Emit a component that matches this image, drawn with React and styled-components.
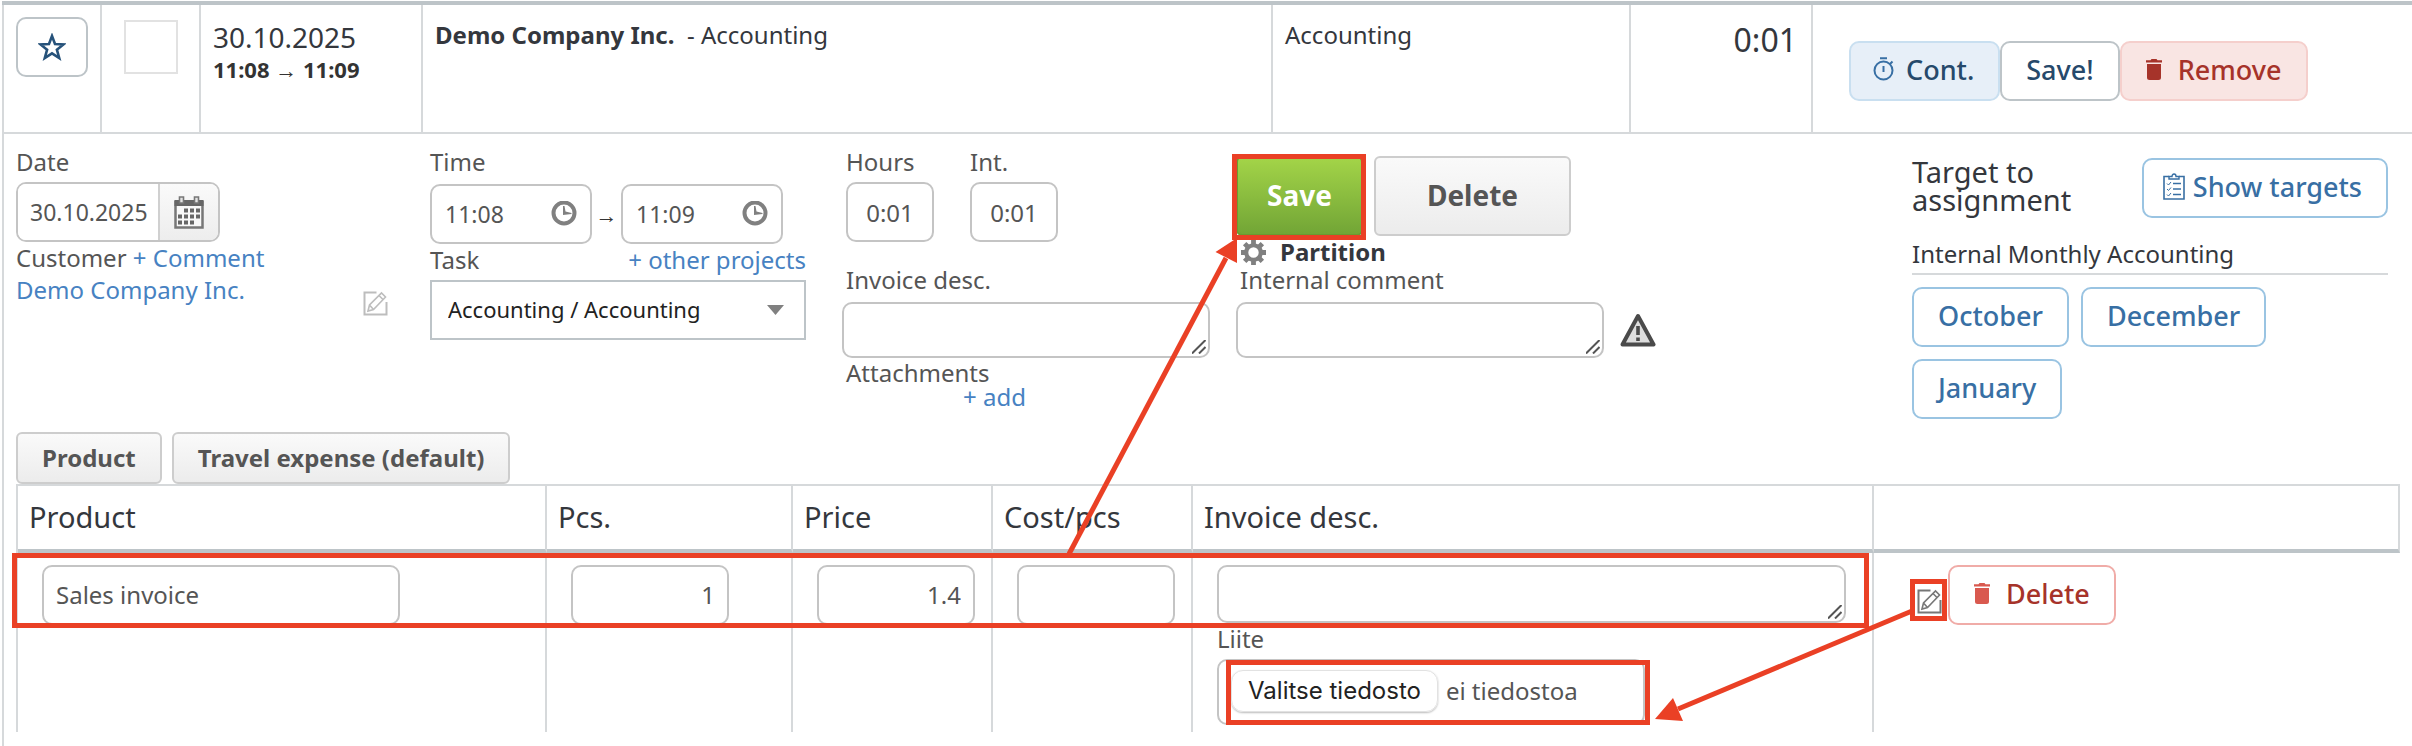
import React from "react";
import styled, { createGlobalStyle, css } from "styled-components";

const Global = createGlobalStyle`
  *, *::before, *::after { box-sizing: border-box; }
  body { margin: 0; background: #fff; }
  body, button, input, select, textarea { font-family: "Noto Sans", "Open Sans", sans-serif; }
`;

const red = "#ea4025";
const line = "#d6d9db";
const bar = "#bdc4c8";

const Page = styled.main`
  min-width: 2300px;
  padding: 1px 0 0 2px;
  color: #34373d;
  font-size: 24px;
  line-height: 32px;
`;

/* Summary row */
const SummaryTable = styled.table`
  width: 100%;
  table-layout: fixed;
  border-collapse: separate;
  border-spacing: 0;
  border-top: 4px solid ${bar};
`;
const SummaryCell = styled.td`
  width: ${(p) => (p.$w ? `${p.$w}px` : "auto")};
  height: 129px;
  padding: ${(p) => p.$pad || "12px"};
  vertical-align: top;
  text-align: ${(p) => p.$align || "left"};
  border-left: 2px solid ${line};
  border-bottom: 2px solid ${line};
`;
const StarButton = styled.button`
  display: flex;
  align-items: center;
  justify-content: center;
  width: 72px;
  height: 60px;
  padding: 0;
  background: #fff;
  border: 2px solid ${bar};
  border-radius: 10px;
`;
const Tick = styled.input`
  appearance: none;
  display: block;
  width: 54px;
  height: 54px;
  margin: 0;
  border: 2px solid #e2e2e2;
`;
const BigText = styled.div`
  font-size: ${(p) => p.$size || 28}px;
  line-height: 40px;
`;
const TimeSpan = styled.div`
  font-size: 22px;
  font-weight: 700;
  line-height: 24px;
  color: #333;
`;
const Actions = styled.div`
  display: flex;
`;
const tones = {
  blue: css`color: #26496b; background: #e7eff8; border-color: #c9dff0;`,
  plain: css`color: #26496b; background: #fff; border-color: ${bar};`,
  red: css`color: #a6332a; background: #f9e5e3; border-color: #f5cfcc;`,
  outline: css`color: #386fa4; background: #fff; border-color: #9ac4e2;`,
  danger: css`color: #a6332a; background: #fff; border-color: #f0aca8;`,
};
const Button = styled.button`
  display: flex;
  align-items: center;
  gap: ${(p) => p.$gap || 12}px;
  height: 60px;
  padding: 0 24px 4px ${(p) => p.$left || 24}px;
  font-size: 27px;
  font-weight: 500;
  white-space: nowrap;
  border: 2px solid;
  border-radius: 10px;
  ${(p) => tones[p.$tone]}
`;

/* Edit form */
const Panel = styled.section`
  border-left: 2px solid ${line};
  padding: 12px 12px 14px;
`;
const Form = styled.form`
  display: flex;
  padding-right: 12px;
  color: #555;
`;
const Column = styled.div`
  width: ${(p) => p.$w}px;
  margin-right: ${(p) => p.$gap || 0}px;
`;
const Label = styled.label`
  display: block;
  padding-left: ${(p) => p.$inset || 0}px;
  margin-bottom: ${(p) => p.$below || 0}px;
`;
const Row = styled.div`
  display: flex;
  align-items: ${(p) => p.$align || "center"};
  justify-content: ${(p) => p.$justify || "flex-start"};
  gap: ${(p) => p.$gap || 0}px;
  margin-bottom: ${(p) => p.$below || 0}px;
`;
const Link = styled.a`
  color: #4782c2;
  text-decoration: none;
`;
const box = css`
  border: 2px solid #c4c4c4;
  border-radius: 10px;
  background: #fff;
  color: #555;
`;
const Input = styled.input`
  ${box}
  display: block;
  width: ${(p) => p.$w}px;
  height: 60px;
  padding: ${(p) => p.$pad || "0 12px 2px"};
  font-size: 24px;
  text-align: ${(p) => p.$align || "left"};
`;
const DateGroup = styled.div`
  ${box}
  display: flex;
  width: 204px;
  height: 60px;
  overflow: hidden;
`;
const DateInput = styled.input`
  width: 140px;
  border: 0;
  padding: 0 0 0 12px;
  font-size: 23px;
  color: #555;
`;
const DateButton = styled.button`
  display: flex;
  align-items: center;
  justify-content: center;
  flex: 1;
  padding: 0;
  border: 0;
  border-left: 2px solid #d0d0d0;
  background: linear-gradient(#fafafa, #ededed);
`;
const TimeField = styled.div`
  ${box}
  display: flex;
  align-items: center;
  width: 162px;
  height: 60px;
  padding: 0 13px;
`;
const TimeInput = styled.input`
  flex: 1;
  min-width: 0;
  height: 40px;
  border: 0;
  padding: 0;
  background: none;
  font-size: 23px;
  color: #555;
`;
const Arrow = styled.span`
  width: 29px;
  text-align: center;
  font-size: 22px;
  color: #333;
`;
const SelectBox = styled.div`
  display: grid;
  align-items: center;
  height: 60px;
  border: 2px solid ${bar};
  > * { grid-area: 1 / 1; }
  > svg { justify-self: end; margin-right: 20px; pointer-events: none; }
`;
const Select = styled.select`
  appearance: none;
  height: 100%;
  padding: 0 16px 2px;
  border: 0;
  background: none;
  font-size: 22px;
  color: #222;
`;
const AreaBox = styled.div`
  display: grid;
  width: ${(p) => (p.$w ? `${p.$w}px` : "100%")};
  height: ${(p) => p.$h || 56}px;
  > * { grid-area: 1 / 1; }
  > svg { place-self: end; margin: 0 4px 4px 0; pointer-events: none; }
`;
const Area = styled.textarea`
  ${box}
  display: block;
  width: 100%;
  height: 100%;
  resize: none;
`;
const Attachments = styled.div`
  margin-top: 3px;
`;
const CompactLine = styled.div`
  line-height: 24px;
  padding-left: ${(p) => p.$inset}px;
`;
const HoursRow = styled.div`
  display: flex;
  gap: 36px;
  padding-left: 4px;
  margin-bottom: 22px;
`;
const CommentColumn = styled.div`
  padding-top: 10px;
`;
const GreyButton = styled.button`
  height: ${(p) => p.$h || 52}px;
  padding: 0 ${(p) => p.$x || 24}px 2px;
  font-size: ${(p) => p.$size || 24}px;
  font-weight: 700;
  color: #555;
  background: linear-gradient(#fafafa, #ececec);
  border: 2px solid #cdcdcd;
  border-radius: 6px;
`;
const GreenButton = styled(GreyButton)`
  color: #fff;
  background: linear-gradient(#a3d448, #72a536);
  border-color: #6a9a30;
`;
const Marked = styled.div`
  position: relative;
  display: flex;
`;
const EditMarked = styled(Marked)`
  margin-top: 12px;
`;
const Mark = styled.span`
  position: absolute;
  z-index: 1;
  inset: ${(p) => p.$inset};
  height: ${(p) => (p.$h ? `${p.$h}px` : "auto")};
  border: 5px solid ${red};
  pointer-events: none;
`;
const MarkArrow = styled.svg`
  position: absolute;
  left: ${(p) => p.$x}px;
  top: ${(p) => p.$y}px;
  z-index: 2;
  fill: ${red};
  stroke: ${red};
  pointer-events: none;
`;
const PartitionLine = styled.div`
  display: flex;
  align-items: center;
  gap: 14px;
  height: 28px;
  padding: 4px 0 0 5px;
  font-weight: 700;
  color: #34373d;
`;
const Targets = styled.aside`
  width: 476px;
  margin-left: auto;
  padding-top: 12px;
  color: #34373d;
`;
const TargetTitle = styled.h2`
  width: 200px;
  margin: 0;
  font-size: 29px;
  font-weight: 400;
  line-height: 28px;
`;
const TargetGroup = styled.h3`
  margin: 20px 0 12px;
  padding-bottom: 3px;
  font-size: 24px;
  font-weight: 400;
  border-bottom: 2px solid ${line};
`;
const Months = styled.div`
  display: flex;
  flex-wrap: wrap;
  gap: 12px;
  padding-right: 100px;
`;
const Tabs = styled.div`
  display: flex;
  gap: 10px;
  margin-top: 13px;
`;

/* Product lines */
const ProductTable = styled.table`
  width: 100%;
  table-layout: fixed;
  border-collapse: separate;
  border-spacing: 0;
  border-left: 2px solid ${line};
`;
const Head = styled.th`
  width: ${(p) => (p.$w ? `${p.$w}px` : "auto")};
  height: 69px;
  padding: 0 0 2px 11px;
  font-size: 29px;
  font-weight: 400;
  text-align: left;
  border-top: 2px solid ${line};
  border-bottom: 4px solid ${bar};
  border-right: 2px solid ${line};
`;
const LineRow = styled.tr`
  position: relative;
`;
const Cell = styled.td`
  height: 179px;
  padding: 12px 26px 0 24px;
  vertical-align: top;
  color: #555;
  border-right: 2px solid ${line};
  &:last-child { border-right: 0; padding-left: 43px; }
`;
const FileField = styled.label`
  ${box}
  position: relative;
  display: flex;
  align-items: center;
  width: 428px;
  height: 66px;
  margin-top: 4px;
  padding: 0 0 2px 12px;
`;
const HiddenFile = styled.input`
  position: absolute;
  width: 1px;
  height: 1px;
  opacity: 0;
`;
const FileButton = styled.span`
  height: 42px;
  margin-right: 8px;
  padding: 0 16px;
  font-family: Inter, sans-serif;
  line-height: 40px;
  font-size: 24px;
  color: #222;
  border: 1px solid #e2e2e2;
  border-radius: 12px;
  box-shadow: 0 1px 2px #0004;
`;
const IconButton = styled.button`
  display: block;
  padding: 0;
  border: 0;
  background: none;
  line-height: 0;
`;
const EditCustomer = styled(IconButton)`
  margin-top: 17px;
`;

const Star = () => (
  <svg width="28" height="28" viewBox="0 0 28 28" fill="none" stroke="#26527a" strokeWidth="2.6">
    <path d="M14 3l3 8 8.500.4-6.600 5.300 2.300 8.300-7.200-4.700-7.200 4.700 2.300-8.300L2.500 11.400 11 11z" />
  </svg>
);
const Calendar = () => (
  <svg width="30" height="33" viewBox="0 0 30 33">
    <path d="M1.500 6h27v25.500h-27z" fill="#f8f8f8" stroke="#777" strokeWidth="2.500" />
    <path d="M.5 4h29v6H.5z" fill="#666" />
    <path d="M5.500 1h4v6h-4zM20.500 1h4v6h-4z" fill="#e4e4e4" stroke="#777" strokeWidth="1.600" />
    <path d="M10 12.500h4v4h-4zM16 12.500h4v4h-4zM22 12.500h4v4h-4zM4 18.500h4v4H4zM10 18.500h4v4h-4zM16 18.500h4v4h-4zM22 18.500h4v4h-4zM4 24.500h4v4H4zM10 24.500h4v4h-4zM16 24.500h4v4h-4z" fill="#666" />
  </svg>
);
const Clock = () => (
  <svg width="26" height="26" viewBox="0 0 26 26">
    <circle cx="13" cy="12" r="10.500" fill="none" stroke="#808080" strokeWidth="4" />
    <path d="M12 5h1.500l1 5.500 6 1.500v1l-8.500 1z" fill="#808080" />
  </svg>
);
const Pencil = ({ color }) => (
  <svg width="25" height="25" viewBox="0 0 25 25" fill="none" stroke={color} strokeWidth="2">
    <path d="M13.500 1.500H1.500v22h22V11" />
    <path d="M5 20l1.500-6L18.500 2l4 4-12 12.500zM16 4.500l4 4M6.500 14l4 4.500" strokeWidth="1.600" />
  </svg>
);
const Gear = () => (
  <svg width="25" height="25" viewBox="0 0 24 24">
    <g fill="none" stroke="#808080">
      <circle cx="12" cy="12" r="7" strokeWidth="4" />
      <path d="M12 0v4M12 20v4M0 12h4M20 12h4M3.500 3.500l3 3M17.500 17.500l3 3M3.500 20.500l3-3M17.500 6.500l3-3" strokeWidth="4.600" />
    </g>
  </svg>
);
const Warning = () => (
  <svg width="36" height="34" viewBox="0 0 36 34">
    <path d="M18 3L33.500 31.500h-31z" fill="#ddd" stroke="#4a4a4a" strokeWidth="4" strokeLinejoin="round" />
    <path d="M18 13v9M18 24.500v3.500" stroke="#4a4a4a" strokeWidth="3.600" />
  </svg>
);
const Stopwatch = () => (
  <svg width="21" height="24" viewBox="0 0 21 24" fill="none" stroke="#386fa4" strokeWidth="2">
    <circle cx="10.500" cy="13.500" r="9" />
    <path d="M7 1.200h7M10.500 9v6M17 7l2.500-2.500" />
  </svg>
);
const Trash = ({ color }) => (
  <svg width="16" height="21" viewBox="0 0 16 21" fill={color}>
    <path d="M0 1.200h4.500L5.500 0h5l1 1.200H16V3.500H0zM1 5h14v13.500a2.500 2.500 0 0 1-2.500 2.500h-9A2.500 2.500 0 0 1 1 18.500z" />
  </svg>
);
const Clipboard = () => (
  <svg width="22" height="27" viewBox="0 0 22 27" fill="none" stroke="#386fa4">
    <path d="M6 3.500H1V26h20V3.500h-5" strokeWidth="1.600" />
    <path d="M6 6V3.500h3a2 2.500 0 0 1 4 0h3V6z" strokeWidth="1.400" />
    <path d="M10 10.500h8M10 16h8M10 21.500h8" strokeWidth="1.600" />
    <path d="M4 10.500l1.500 1.500L8 9M4 16l1.500 1.500L8 14.500M4 21.500L5.500 23 8 20" strokeWidth="1" />
  </svg>
);
const Triangle = () => (
  <svg width="17" height="10" viewBox="0 0 17 10" fill="#808080"><path d="M0 0h17L8.500 10z" /></svg>
);
const Grip = () => (
  <svg width="14" height="14" viewBox="0 0 14 14" stroke="#555" strokeWidth="2"><path d="M0 13.500L13.500 0M7 13.500L13.500 7" /></svg>
);

const TextArea = ({ id, w, h, label }) => (
  <AreaBox $w={w} $h={h}>
    <Area id={id} aria-label={label} />
    <Grip />
  </AreaBox>
);

const heads = [["Product", 529], ["Pcs.", 246], ["Price", 200], ["Cost/pcs", 200], ["Invoice desc.", 0], ["", 526]];

export default function App() {
  return (
    <>
      <Global />
      <Page>
        <SummaryTable>
          <tbody>
            <tr>
              <SummaryCell $w={98}><StarButton aria-label="Favourite"><Star /></StarButton></SummaryCell>
              <SummaryCell $w={99} $pad="15px 22px"><Tick type="checkbox" aria-label="Select entry" /></SummaryCell>
              <SummaryCell $w={222}>
                <BigText>30.10.2025</BigText>
                <TimeSpan>11:08 → 11:09</TimeSpan>
              </SummaryCell>
              <SummaryCell $pad="14px 12px"><b>Demo Company Inc.</b>&nbsp; - Accounting</SummaryCell>
              <SummaryCell $w={358} $pad="14px 12px">Accounting</SummaryCell>
              <SummaryCell $w={182} $align="right" $pad="15px 14px"><BigText $size={32}>0:01</BigText></SummaryCell>
              <SummaryCell $w={601} $pad="36px 36px 0">
                <Actions>
                  <Button $tone="blue" $left={22}><Stopwatch />Cont.</Button>
                  <Button $tone="plain">Save!</Button>
                  <Button $tone="red" $gap={16}><Trash color="#a6332a" />Remove</Button>
                </Actions>
              </SummaryCell>
            </tr>
          </tbody>
        </SummaryTable>

        <Panel>
          <Form onSubmit={(e) => e.preventDefault()}>
            <Column $w={372} $gap={42}>
              <Label htmlFor="date" $below={4}>Date</Label>
              <DateGroup>
                <DateInput id="date" defaultValue="30.10.2025" />
                <DateButton type="button" aria-label="Pick a date"><Calendar /></DateButton>
              </DateGroup>
              <div>Customer <Link href="#comment">+ Comment</Link></div>
              <Row $justify="space-between" $align="flex-start">
                <Link href="#customer">Demo Company Inc.</Link>
                <EditCustomer type="button" aria-label="Edit customer"><Pencil color="#bdbdbd" /></EditCustomer>
              </Row>
            </Column>

            <Column $w={376} $gap={36}>
              <Label htmlFor="from" $below={6}>Time</Label>
              <Row>
                <TimeField><TimeInput id="from" defaultValue="11:08" /><Clock /></TimeField>
                <Arrow>→</Arrow>
                <TimeField><TimeInput aria-label="End time" defaultValue="11:09" /><Clock /></TimeField>
              </Row>
              <Row $justify="space-between" $below={4}>
                <Label htmlFor="task">Task</Label>
                <Link href="#projects">+ other projects</Link>
              </Row>
              <SelectBox>
                <Select id="task"><option>Accounting / Accounting</option></Select>
                <Triangle />
              </SelectBox>
            </Column>

            <Column $w={368} $gap={26}>
              <HoursRow>
                <div>
                  <Label htmlFor="hours" $below={4}>Hours</Label>
                  <Input id="hours" $w={88} $pad="0" $align="center" defaultValue="0:01" />
                </div>
                <div>
                  <Label htmlFor="int" $below={4}>Int.</Label>
                  <Input id="int" $w={88} $pad="0" $align="center" defaultValue="0:01" />
                </div>
              </HoursRow>
              <Label htmlFor="desc" $inset={4} $below={6}>Invoice desc.</Label>
              <TextArea id="desc" w={368} />
              <Attachments>
                <CompactLine $inset={4}>Attachments</CompactLine>
                <CompactLine $inset={121}><Link href="#add">+ add</Link></CompactLine>
              </Attachments>
            </Column>

            <CommentColumn>
              <Row $gap={11}>
                <Marked>
                  <GreenButton $h={80} $x={29} $size={28}>Save</GreenButton>
                  <Mark $inset="-2px -3px -4px -4px" />
                  <MarkArrow $x={-170} $y={80} width="174" height="318" viewBox="0 0 174 318">
                    <path d="M3 318L160 22" strokeWidth="5" />
                    <path d="M171 2V27L149.500 16z" stroke="none" />
                  </MarkArrow>
                </Marked>
                <GreyButton type="button" $h={80} $x={51} $size={28}>Delete</GreyButton>
              </Row>
              <PartitionLine><Gear />Partition</PartitionLine>
              <Label htmlFor="comment" $inset={4} $below={6}>Internal comment</Label>
              <Row $gap={16}>
                <TextArea id="comment" w={368} />
                <Warning />
              </Row>
            </CommentColumn>

            <Targets>
              <Row $justify="space-between" $align="flex-start">
                <TargetTitle>Target to assignment</TargetTitle>
                <Button type="button" $tone="outline" $left={19} $gap={8}><Clipboard />Show targets</Button>
              </Row>
              <TargetGroup>Internal Monthly Accounting</TargetGroup>
              <Months>
                {["October", "December", "January"].map((m) => (
                  <Button type="button" key={m} $tone="outline">{m}</Button>
                ))}
              </Months>
            </Targets>
          </Form>

          <Tabs>
            <GreyButton>Product</GreyButton>
            <GreyButton>Travel expense (default)</GreyButton>
          </Tabs>
          <ProductTable>
            <thead>
              <tr>{heads.map(([t, w], i) => <Head key={i} $w={w}>{t}</Head>)}</tr>
            </thead>
            <tbody>
              <LineRow>
                <Cell>
                  <Input aria-label="Product" $w={358} defaultValue="Sales invoice" />
                  <Mark $inset="0 531px auto -6px" $h={75} />
                </Cell>
                <Cell><Input aria-label="Pieces" $w={158} $align="right" defaultValue="1" /></Cell>
                <Cell><Input aria-label="Price" $w={158} $align="right" defaultValue="1.4" /></Cell>
                <Cell><Input aria-label="Cost per piece" $w={158} /></Cell>
                <Cell>
                  <TextArea label="Invoice description" h={58} />
                  <div>Liite</div>
                  <FileField>
                    <HiddenFile type="file" />
                    <FileButton>Valitse tiedosto</FileButton>ei tiedostoa
                    <Mark $inset="-1px -7px -2px 7px" />
                  </FileField>
                </Cell>
                <Cell>
                  <Row $gap={6}>
                    <EditMarked>
                      <IconButton aria-label="Edit line"><Pencil color="#777" /></IconButton>
                      <Mark $inset="-10px -5px -7px -7px" />
                      <MarkArrow $x={-265} $y={11} width="265" height="130" viewBox="0 0 265 130">
                        <path d="M260 11L26 109" strokeWidth="5" />
                        <path d="M3 119L21 98L31 121z" stroke="none" />
                      </MarkArrow>
                    </EditMarked>
                    <Button $tone="danger" $gap={16}><Trash color="#d9594f" />Delete</Button>
                  </Row>
                </Cell>
              </LineRow>
            </tbody>
          </ProductTable>
        </Panel>
      </Page>
    </>
  );
}
